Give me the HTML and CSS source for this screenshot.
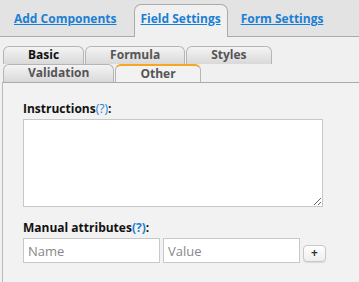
FILE: index.html
```html
<!DOCTYPE html>
<html lang="en">
<head>
    <meta charset="UTF-8">
    <meta name="viewport" content="width=device-width, initial-scale=1.0">
    <title>Field Settings</title>
    <link rel="stylesheet" href="styles.css">
</head>
<body>
    <div class="main-tabs">
        <a href="#" class="main-tab">Add Components</a>
        <a href="#" class="main-tab active">Field Settings</a>
        <a href="#" class="main-tab">Form Settings</a>
    </div>

    <div class="settings">
        <ul class="sub-tabs">
            <li class="sub-tab hover">Basic</li>
            <li class="sub-tab">Formula</li>
            <li class="sub-tab">Styles</li>
            <li class="sub-tab">Validation</li>
            <li class="sub-tab active">Other</li>
        </ul>

        <div class="panel">
            <div class="form-group">
                <label for="instructions">Instructions<a href="#" class="help">(?)</a>:</label>
                <textarea id="instructions"></textarea>
            </div>
            <div class="form-group">
                <label>Manual attributes<a href="#" class="help bold">(?)</a>:</label>
                <div class="attr-row">
                    <input type="text" placeholder="Name">
                    <input type="text" placeholder="Value">
                    <button class="add-button">+</button>
                </div>
            </div>
        </div>
    </div>
</body>
</html>
```

FILE: styles.css
```css
body {
    margin: 0;
    font-family: "Open Sans", Arial, sans-serif;
    font-size: 12px;
    background-color: #f0f0f0;
    overflow: hidden;
    height: 282px;
}
.main-tabs {
    display: flex;
    align-items: flex-end;
    height: 36px;
    padding-left: 7px;
    background-color: #e3e3e3;
    border-bottom: 1px solid #aaa;
}
.main-tab {
    display: block;
    padding: 0 6px;
    margin-right: 6px;
    height: 33px;
    line-height: 28px;
    font-weight: bold;
    color: #1a7fd4;
    text-decoration: underline;
    box-sizing: border-box;
    border: 1px solid transparent;
    border-bottom: none;
    margin-bottom: -1px;
}
.main-tab.active {
    margin-left: 4px;
    background-color: #f0f0f0;
    border-color: #aaa;
    border-radius: 7px 7px 0 0;
}
.settings {
    padding: 9px 0 0 2px;
}
.sub-tabs {
    list-style: none;
    margin: 0;
    padding: 0 0 0 1px;
    display: flex;
    flex-wrap: wrap;
    column-gap: 1px;
    width: 300px;
}
.sub-tab {
    height: 18px;
    line-height: 16px;
    padding: 0 24px;
    font-weight: bold;
    color: #555;
    background: linear-gradient(#f4f4f4, #d9d9d9);
    border: 1px solid #b5b5b5;
    border-bottom: none;
    border-radius: 6px 6px 0 0;
    box-sizing: border-box;
    cursor: pointer;
}
.sub-tab.hover {
    color: #111;
}
.sub-tab.active {
    background: #f2f2f2;
    border-top: 2px solid #f5a623;
    margin-bottom: -1px;
    height: 18px;
}
.panel {
    background-color: #f2f2f2;
    border-top: 1px solid #aaa;
    border-left: 1px solid #bbb;
    padding: 16px 0 0 20px;
    height: 200px;
}
.form-group {
    margin-bottom: 11px;
}
label {
    display: block;
    font-weight: bold;
    color: #111;
    line-height: 20px;
}
.help {
    color: #1a7fd4;
    font-weight: normal;
    text-decoration: none;
}
.help.bold {
    font-weight: bold;
}
textarea {
    display: block;
    width: 300px;
    height: 88px;
    box-sizing: border-box;
    border: 1px solid #c8c8c8;
    background-color: white;
    margin: 0;
}
.attr-row {
    display: flex;
    align-items: center;
    gap: 3px;
}
input[type="text"] {
    width: 137px;
    height: 25px;
    box-sizing: border-box;
    border: 1px solid #c8c8c8;
    padding: 0 4px;
    margin: 0;
    font-family: "Open Sans", Arial, sans-serif;
    font-size: 13px;
}
input::placeholder {
    color: #888;
}
.add-button {
    width: 23px;
    height: 17px;
    margin-top: 5px;
    padding: 0;
    border: 1px solid #c8c8c8;
    border-radius: 4px;
    background: linear-gradient(#fff, #eee);
    box-shadow: 0 1px 1px rgba(0,0,0,0.1);
    font-family: "Open Sans", Arial, sans-serif;
    font-size: 12px;
    font-weight: bold;
    line-height: 14px;
    color: #333;
}
```
